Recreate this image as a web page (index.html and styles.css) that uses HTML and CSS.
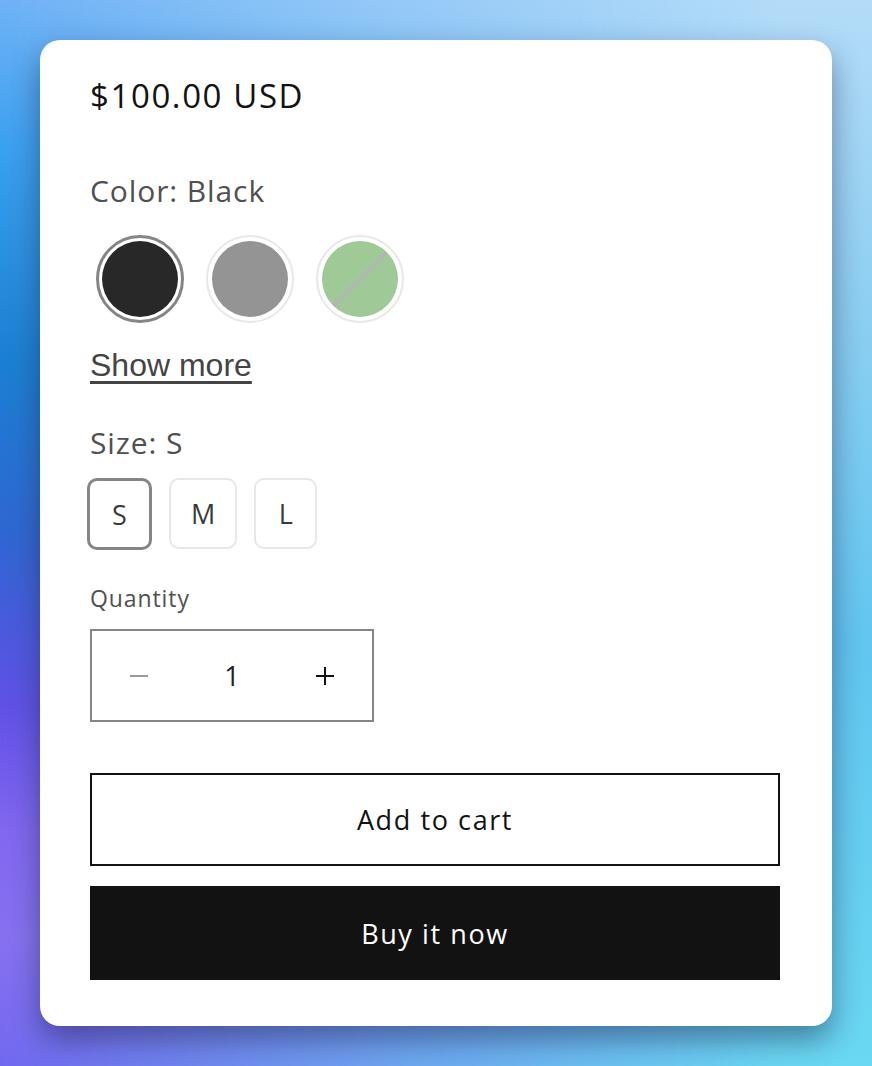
FILE: index.html
```html
<!DOCTYPE html>
<html lang="en">
<head>
  <meta charset="UTF-8" />
  <meta name="viewport" content="width=device-width, initial-scale=1.0"/>
  <title>Product form</title>
  <link rel="stylesheet" href="styles.css">
</head>
<body>
  <div class="card">
    <div class="price">$100.00 USD</div>

    <div class="option-label color-label">Color: Black</div>
    <div class="swatches">
      <span class="swatch selected"><span class="dot black"></span></span>
      <span class="swatch"><span class="dot gray"></span></span>
      <span class="swatch"><span class="dot green unavailable"></span></span>
    </div>
    <a class="show-more" href="#">Show more</a>

    <div class="option-label size-label">Size: S</div>
    <div class="sizes">
      <span class="size selected">S</span>
      <span class="size">M</span>
      <span class="size">L</span>
    </div>

    <div class="qty-label">Quantity</div>
    <div class="qty">
      <button class="qty-btn minus" aria-label="Decrease">
        <svg width="20" height="20" viewBox="0 0 20 20"><path d="M1 10h18" stroke="#999" stroke-width="2"/></svg>
      </button>
      <span class="qty-value">1</span>
      <button class="qty-btn plus" aria-label="Increase">
        <svg width="20" height="20" viewBox="0 0 20 20"><path d="M1 10h18M10 1v18" stroke="#121212" stroke-width="2"/></svg>
      </button>
    </div>

    <button class="btn add">Add to cart</button>
    <button class="btn buy">Buy it now</button>
  </div>
</body>
</html>
```

FILE: styles.css
```css
body {
  margin: 0;
  min-height: 1066px;
  font-family: 'Open Sans', sans-serif;
  color: #121212;
  background: linear-gradient(to bottom, #70b2f6 0%, #3aa0f0 14%, #1a7fd2 34%, #2f66d2 50%, #6050e6 66%, #8366f0 78%, #8870f0 88%, #7268f0 100%);
  position: relative;
  display: flex;
  justify-content: center;
  padding: 40px 0;
  box-sizing: border-box;
}

body::before {
  content: "";
  position: absolute;
  inset: 0;
  background: linear-gradient(to bottom, #b4dcf8 0%, #8ccff2 30%, #62c6f0 60%, #6ad8f2 100%);
  -webkit-mask-image: linear-gradient(to right, transparent 0%, rgba(0,0,0,0.55) 45%, #000 90%);
  mask-image: linear-gradient(to right, transparent 0%, rgba(0,0,0,0.55) 45%, #000 90%);
}

.card {
  position: relative;
  width: 792px;
  background: #fff;
  border-radius: 20px;
  box-shadow: 0 14px 30px rgba(20, 20, 60, 0.45);
  padding: 36px 52px 46px 50px;
  box-sizing: border-box;
  display: flex;
  flex-direction: column;
  align-items: flex-start;
}

.price {
  font-size: 33px;
  line-height: 40px;
  letter-spacing: 1.6px;
}

.option-label {
  font-size: 30px;
  line-height: 40px;
  letter-spacing: 0.9px;
  color: #505050;
}

.color-label {
  margin-top: 55px;
}

.swatches {
  display: flex;
  gap: 22px;
  margin-top: 24px;
  margin-left: 6px;
}

.swatch {
  width: 88px;
  height: 88px;
  border-radius: 50%;
  border: 2px solid #e8e8e6;
  padding: 4px;
  box-sizing: border-box;
  display: flex;
}

.swatch.selected {
  border: 3px solid #858585;
  padding: 3px;
}

.dot {
  flex: 1;
  border-radius: 50%;
}

.dot.black { background: #282828; }
.dot.gray { background: #949494; }
.dot.green { background: #a0c998; }

.dot.unavailable {
  background: linear-gradient(to bottom right, transparent calc(50% - 2px), #b4b4b4 calc(50% - 2px), #b4b4b4 calc(50% + 2px), transparent calc(50% + 2px)), #a0c998;
}

.show-more {
  margin-top: 22px;
  font-family: 'Liberation Sans', Arial, sans-serif;
  font-size: 32px;
  line-height: 40px;
  color: #444;
  text-decoration: underline;
  text-decoration-thickness: 3px;
  text-underline-offset: 5px;
}

.size-label {
  margin-top: 38px;
}

.sizes {
  display: flex;
  gap: 17px;
  margin-top: 15px;
  margin-left: -3px;
}

.size {
  height: 71px;
  min-width: 63px;
  padding: 0 20px;
  border: 2px solid #e8e8e2;
  border-radius: 10px;
  box-sizing: border-box;
  display: flex;
  align-items: center;
  justify-content: center;
  font-size: 27px;
  color: #3a3a3a;
}

.size.selected {
  height: 72px;
  min-width: 65px;
  border: 3px solid #858585;
  padding: 0 22px;
}

.qty-label {
  margin-top: 33px;
  font-size: 23px;
  line-height: 30px;
  letter-spacing: 0.9px;
  color: #505050;
}

.qty {
  margin-top: 16px;
  width: 284px;
  height: 93px;
  border: 2px solid #858585;
  box-sizing: border-box;
  display: grid;
  grid-template-columns: 94px 1fr 94px;
  align-items: center;
}

.qty-btn {
  background: none;
  border: none;
  height: 100%;
  display: flex;
  align-items: center;
  justify-content: center;
  padding: 0;
}

.qty-value {
  text-align: center;
  font-size: 27px;
  color: #222;
}

.btn {
  width: 100%;
  height: 93px;
  font-family: 'Open Sans', sans-serif;
  font-size: 27px;
  letter-spacing: 1.6px;
  cursor: pointer;
}

.add {
  margin-top: 51px;
  background: #fff;
  color: #121212;
  border: 2px solid #121212;
}

.buy {
  margin-top: 20px;
  height: 94px;
  background: #121212;
  color: #fff;
  border: none;
}
```
